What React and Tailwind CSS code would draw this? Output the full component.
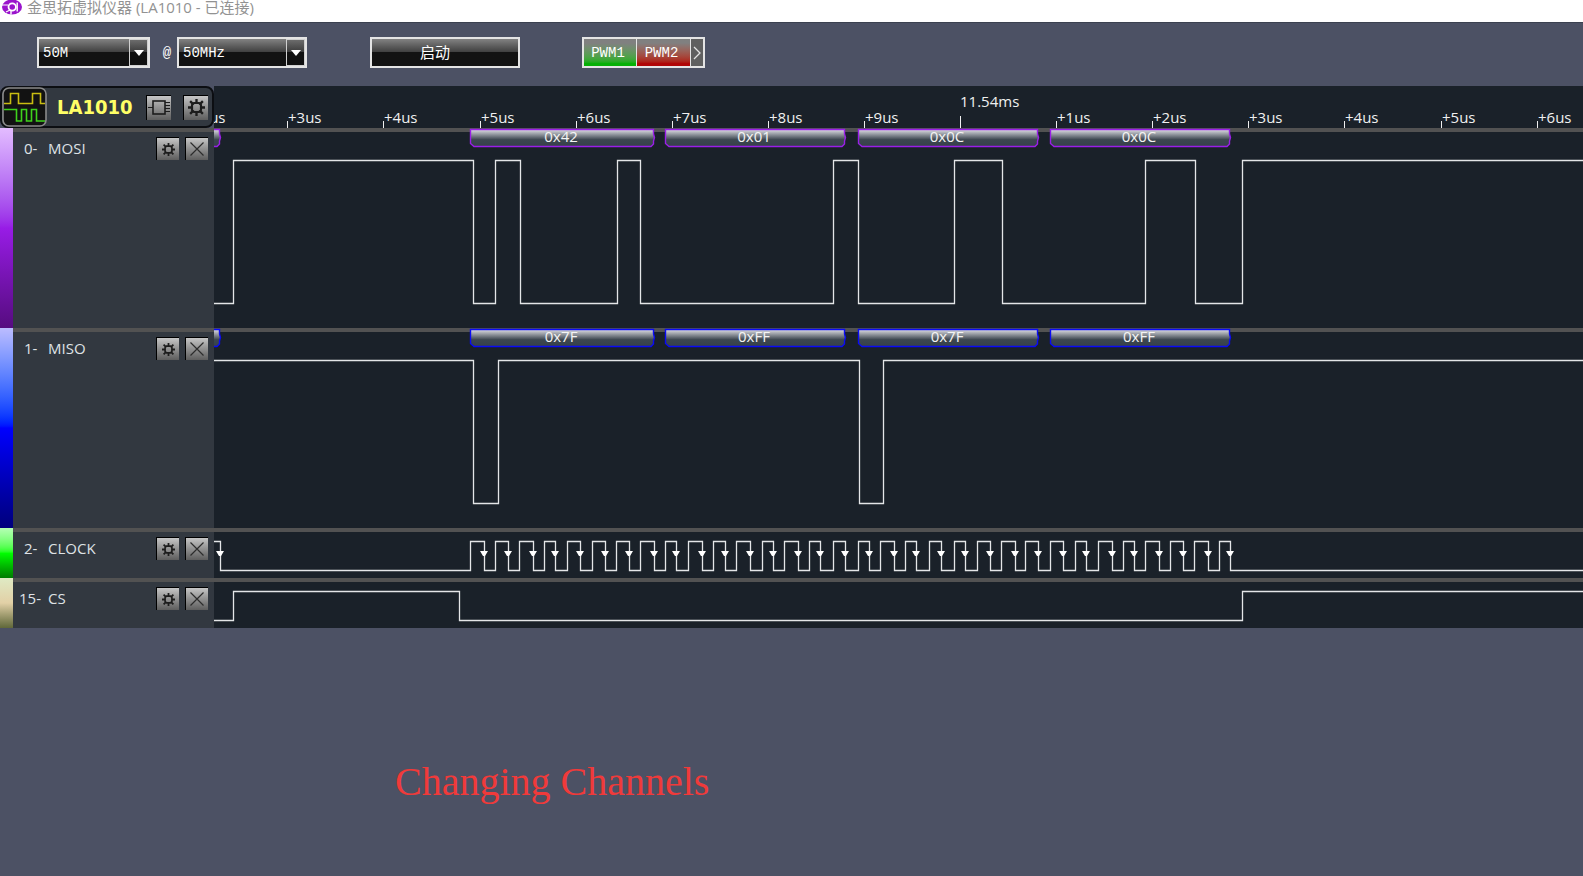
import { useState } from "react";

// Edge positions are in pixels from the left side of the plot area.
const initialChannels = [
  {
    id: 0,
    name: "MOSI",
    tall: true,
    color: "#9a1fe8",
    strip: "bg-linear-to-b from-[#e3bcff] via-[#981ce6] to-[#560c80]",
    startHigh: false,
    edges: [19, 259, 281, 306, 403, 426, 619, 644, 740, 788, 931, 981, 1028],
    frames: [
      { from: -173, to: 6, text: "" },
      { from: 256, to: 440, text: "0x42" },
      { from: 451, to: 631, text: "0x01" },
      { from: 644, to: 824, text: "0x0C" },
      { from: 836, to: 1016, text: "0x0C" },
    ],
  },
  {
    id: 1,
    name: "MISO",
    tall: true,
    color: "#0a0af5",
    strip: "bg-linear-to-b from-[#bcbcff] via-[#0000ff] to-[#00007c]",
    startHigh: true,
    edges: [259, 284, 645, 669],
    frames: [
      { from: -173, to: 6, text: "" },
      { from: 256, to: 440, text: "0x7F" },
      { from: 451, to: 631, text: "0xFF" },
      { from: 644, to: 824, text: "0x7F" },
      { from: 836, to: 1016, text: "0xFF" },
    ],
  },
  {
    id: 2,
    name: "CLOCK",
    tall: false,
    strip: "bg-linear-to-b from-[#b4ffb4] via-[#00ff00] to-[#007c00]",
    startHigh: true,
    arrows: true,
    edges: [
      6, 256, 270, 281, 294, 305, 319, 330, 341, 353, 366, 378, 391, 402, 415,
      426, 440, 451, 462, 474, 488, 499, 511, 522, 536, 548, 559, 570, 584, 595,
      606, 619, 631, 644, 655, 666, 680, 691, 702, 715, 727, 740, 751, 763, 776,
      787, 801, 811, 824, 836, 849, 861, 872, 884, 898, 909, 920, 931, 945, 956,
      969, 980, 994, 1005, 1016,
    ],
    frames: [],
  },
  {
    id: 15,
    name: "CS",
    tall: false,
    strip: "bg-linear-to-b from-[#dfeac4] via-[#e2d0a6] to-[#60683a]",
    startHigh: false,
    edges: [19, 245, 1028],
    frames: [],
  },
];

const PLOT_END = 4000;

function wavePath(edges, startHigh, high, low) {
  let level = startHigh ? high : low;
  let d = `M-2 ${level}`;
  edges.forEach((x) => {
    level = level === high ? low : high;
    d += `H${x + 0.5}V${level}`;
  });
  return `${d}H${PLOT_END}`;
}

function GearIcon({ size }) {
  return (
    <svg width={size} height={size} viewBox="0 0 16 16" fill="none" stroke="#1c1c1c">
      <path
        strokeWidth="2.2"
        d="M8 0V4M8 12V16M0 8H4M12 8H16M2 2L5 5M11 11L14 14M2 14L5 11M11 5L14 2"
      />
      <path strokeWidth="2" d="M5.6 3.8H10.4L12.2 5.6V10.4L10.4 12.2H5.6L3.8 10.4V5.6Z" />
    </svg>
  );
}

function CloseIcon() {
  return (
    <svg width="16" height="16" viewBox="0 0 16 16" stroke="#2c2c2c" strokeWidth="1.2">
      <path d="M1.5 1.5L14.5 14.5M14.5 1.5L1.5 14.5" />
    </svg>
  );
}

function ChipIcon() {
  return (
    <svg width="23" height="17" viewBox="0 0 23 17" fill="none" stroke="#1c1c1c">
      <rect x="5" y="2" width="12" height="13" strokeWidth="1.6" />
      <path d="M0 8.5H5M17 3.5H22M17 6.5H22M17 9.5H22M17 12.5H22" />
    </svg>
  );
}

function AppLogo() {
  return (
    <svg width="20" height="15" viewBox="0 0 20 15" fill="none">
      <ellipse cx="10" cy="7" rx="10" ry="7.5" fill="#9a14cc" />
      <path d="M0 5H6M4 12L8 10" stroke="#fff" strokeWidth="1.2" />
      <circle cx="10.2" cy="7" r="3.7" stroke="#fff" strokeWidth="1.8" />
      <path d="M15.2 2.5V11.5M9 11V14.5" stroke="#fff" strokeWidth="1.4" />
      <path d="M10 7H13" stroke="#9a14cc" strokeWidth="1.4" />
    </svg>
  );
}

function DeviceLogo() {
  return (
    <svg width="45" height="40" viewBox="0 0 45 40" fill="none">
      <rect x="1" y="1" width="43" height="38" rx="6" fill="#121212" stroke="#8a8a8a" strokeWidth="1.6" />
      <path d="M2 16.5H8.5V6.5H16.5V16.5H30.5V6.5H38.5V16.5H43" stroke="#c9bd12" strokeWidth="1.6" />
      <path d="M2 22.5H14.5V34H19.5V22.5H24.5V34H29.5V22.5H34.5V34H43" stroke="#3fd21c" strokeWidth="1.6" />
    </svg>
  );
}

function IconButton({ label, large, onClick, children }) {
  return (
    <button
      type="button"
      aria-label={label}
      onClick={onClick}
      className={`flex shrink-0 items-center justify-center border-t border-l border-black bg-linear-to-b from-[#c6c6c6] to-[#5e5e5e] ${
        large ? "size-[25px]" : "size-[23px]"
      }`}
    >
      {children}
    </button>
  );
}

function DropDown({ label, width, options }) {
  const [value, setValue] = useState(options[0]);

  return (
    <div className={`relative h-[31px] ${width}`}>
      <select
        aria-label={label}
        value={value}
        onChange={(e) => setValue(e.target.value)}
        className="h-full w-full appearance-none border-2 border-[#e4e4e4] bg-linear-to-b from-[#828282] from-0% via-[#404040] via-48% to-[#121212] to-50% pl-1 font-['Liberation_Mono',monospace] text-sm text-white"
      >
        {options.map((option) => (
          <option key={option} className="text-black">
            {option}
          </option>
        ))}
      </select>
      <span className="pointer-events-none absolute inset-y-[2px] right-[2px] flex w-[19px] items-center justify-center border border-[#d0d0d0] bg-linear-to-b from-[#6c6c6c] from-0% via-[#3c3c3c] via-48% to-[#101010] to-50%">
        <svg width="10" height="6" viewBox="0 0 10 6" fill="#fff">
          <path d="M0 0H10L5 6Z" />
        </svg>
      </span>
    </div>
  );
}

function Toolbar() {
  const [running, setRunning] = useState(false);

  return (
    <div className="flex h-16 items-start border-t border-[#3b4150] pt-[14px] pl-[37px] font-['Liberation_Mono','Noto_Sans_CJK_SC',monospace] text-sm text-white">
      <DropDown label="Sample depth" width="w-[113px]" options={["50M", "20M", "10M"]} />
      <span className="w-[27px] pl-[7px] text-center leading-8">@</span>
      <DropDown label="Sample rate" width="w-[130px]" options={["50MHz", "20MHz", "10MHz"]} />
      <button
        type="button"
        onClick={() => setRunning(!running)}
        className="ml-[63px] h-[31px] w-[150px] border-2 border-[#e4e4e4] bg-linear-to-b from-[#828282] from-0% via-[#404040] via-48% to-[#121212] to-50% pr-5 pb-[2px] font-['Noto_Sans_CJK_SC',sans-serif] text-[15px] leading-none"
      >
        启动
      </button>
      <div className="ml-[62px] flex h-[31px] border-2 border-[#e4e4e4]">
        <button
          type="button"
          className="w-[53px] border-r border-[#e4e4e4] bg-linear-to-b from-[#808080] from-15% to-[#06b006] to-90% pr-1"
        >
          PWM1
        </button>
        <button
          type="button"
          className="w-[54px] border-r border-[#e4e4e4] bg-linear-to-b from-[#808080] from-15% to-[#b00606] to-90% pr-1"
        >
          PWM2
        </button>
        <button
          type="button"
          aria-label="More outputs"
          className="flex w-3 items-center justify-center bg-[#606060]"
        >
          <svg width="8" height="14" viewBox="0 0 8 14" fill="none" stroke="#e4e4e4" strokeWidth="1.3">
            <path d="M1 1L7 7L1 13" />
          </svg>
        </button>
      </div>
    </div>
  );
}

function TimeRuler() {
  const ticks = [];
  for (let n = -8; n <= 6; n++) {
    ticks.push({ n, x: Math.round(746 + n * 96.1) });
  }

  return (
    <svg className="h-[42px] min-w-0 flex-1 bg-[#1a2129]" fill="#f0f0f0" fontSize="15">
      {ticks.map(({ n, x }) =>
        n === 0 ? (
          <g key={n}>
            <text x={x} y="21">
              11.54ms
            </text>
            <path d={`M${x + 0.5} 30V42`} stroke="#f0f0f0" />
          </g>
        ) : (
          <g key={n}>
            <text x={x + 1} y="37">
              +{(n + 10) % 10}us
            </text>
            <path d={`M${x + 0.5} 35V42`} stroke="#f0f0f0" />
          </g>
        )
      )}
    </svg>
  );
}

function Frame({ from, to, text, color, channel }) {
  return (
    <g>
      <path
        d={`M${from + 0.5} 1.5H${to - 0.5}V6L${to + 0.5} 9.5L${to - 0.5} 13V16L${to - 3} 18.5H${from + 4}L${from + 0.5} 15.5Z`}
        fill={`url(#frame-${channel})`}
        stroke={color}
        strokeWidth="1.4"
      />
      {text && (
        <text x={(from + to) / 2 - 1} y="14" textAnchor="middle" fill="#f4f4f4" fontSize="15">
          {text}
        </text>
      )}
    </g>
  );
}

function Plot({ channel }) {
  const high = channel.tall ? 32.5 : 13.5;
  const low = channel.tall ? 175.5 : 42.5;
  // decoding markers sit on every falling edge
  const falling = channel.edges.filter((_, i) => i % 2 === (channel.startHigh ? 0 : 1));

  return (
    <svg className={`min-w-0 flex-1 bg-[#1a2129] ${channel.tall ? "h-[200px]" : "h-[50px]"}`}>
      <defs>
        <linearGradient id={`frame-${channel.id}`} x1="0" y1="0" x2="0" y2="1">
          <stop offset="0" stopColor="#e0e0e6" />
          <stop offset="0.6" stopColor="#3c464f" />
          <stop offset="1" stopColor="#36414a" />
        </linearGradient>
      </defs>
      <rect width="100%" height="4" fill="#525252" />
      <path
        d={wavePath(channel.edges, channel.startHigh, high, low)}
        fill="none"
        stroke="#e4e6e8"
        strokeWidth="1.3"
      />
      {channel.arrows &&
        falling.map((x) => <path key={x} d={`M${x - 4} 23H${x + 4}L${x + 1} 28H${x - 1}Z`} fill="#fff" />)}
      {channel.frames.map((frame) => (
        <Frame key={frame.from} {...frame} color={channel.color} channel={channel.id} />
      ))}
    </svg>
  );
}

function ChannelRow({ channel, onRemove }) {
  return (
    <div className="flex">
      <div className={`w-[13px] shrink-0 ${channel.strip}`} />
      <div className="w-[201px] shrink-0 border-t-4 border-[#525252] bg-[#323840]">
        <div className="flex items-center pt-[5px] pr-[6px]">
          <span className={`w-[35px] text-[15px] text-[#dfe2e6] ${channel.id > 9 ? "pl-[6px]" : "pl-[11px]"}`}>
            {channel.id}-
          </span>
          <span className="flex-1 text-[15px] text-[#dfe2e6]">{channel.name}</span>
          <div className="flex gap-[6px]">
            <IconButton label={`${channel.name} settings`}>
              <GearIcon size={13} />
            </IconButton>
            <IconButton label={`Remove ${channel.name}`} onClick={onRemove}>
              <CloseIcon />
            </IconButton>
          </div>
        </div>
      </div>
      <Plot channel={channel} />
    </div>
  );
}

export default function App() {
  const [channels, setChannels] = useState(initialChannels);

  const removeChannel = (id) => {
    setChannels(channels.filter((c) => c.id !== id));
  };

  return (
    <div className="min-h-screen bg-[#4c5164] font-['Open_Sans','Noto_Sans_CJK_SC',sans-serif]">
      <header className="flex h-[22px] items-start gap-[5px] bg-white pl-[2px]">
        <AppLogo />
        <h1 className="text-[15px] leading-[15px] text-[#929292]">金思拓虚拟仪器 (LA1010 - 已连接)</h1>
      </header>

      <Toolbar />

      <main>
        <div className="flex">
          <div className="flex w-[214px] shrink-0 items-center rounded-lg border-2 border-[#0c0e12] bg-[#323840] pr-1">
            <div className="-my-px shrink-0">
              <DeviceLogo />
            </div>
            <h2 className="flex-1 pl-[10px] font-['DejaVu_Sans_Condensed','DejaVu_Sans',sans-serif] text-xl font-bold text-[#ffff66]">
              LA1010
            </h2>
            <div className="flex gap-3">
              <IconButton label="Device" large>
                <ChipIcon />
              </IconButton>
              <IconButton label="Device settings" large>
                <GearIcon size={17} />
              </IconButton>
            </div>
          </div>
          <TimeRuler />
        </div>
        {channels.map((channel) => (
          <ChannelRow key={channel.id} channel={channel} onRemove={() => removeChannel(channel.id)} />
        ))}
      </main>

      <p className="pt-[134px] pl-[395px] font-['Liberation_Serif',serif] text-[40px] leading-10 text-[#f03a3a]">
        Changing Channels
      </p>
    </div>
  );
}
